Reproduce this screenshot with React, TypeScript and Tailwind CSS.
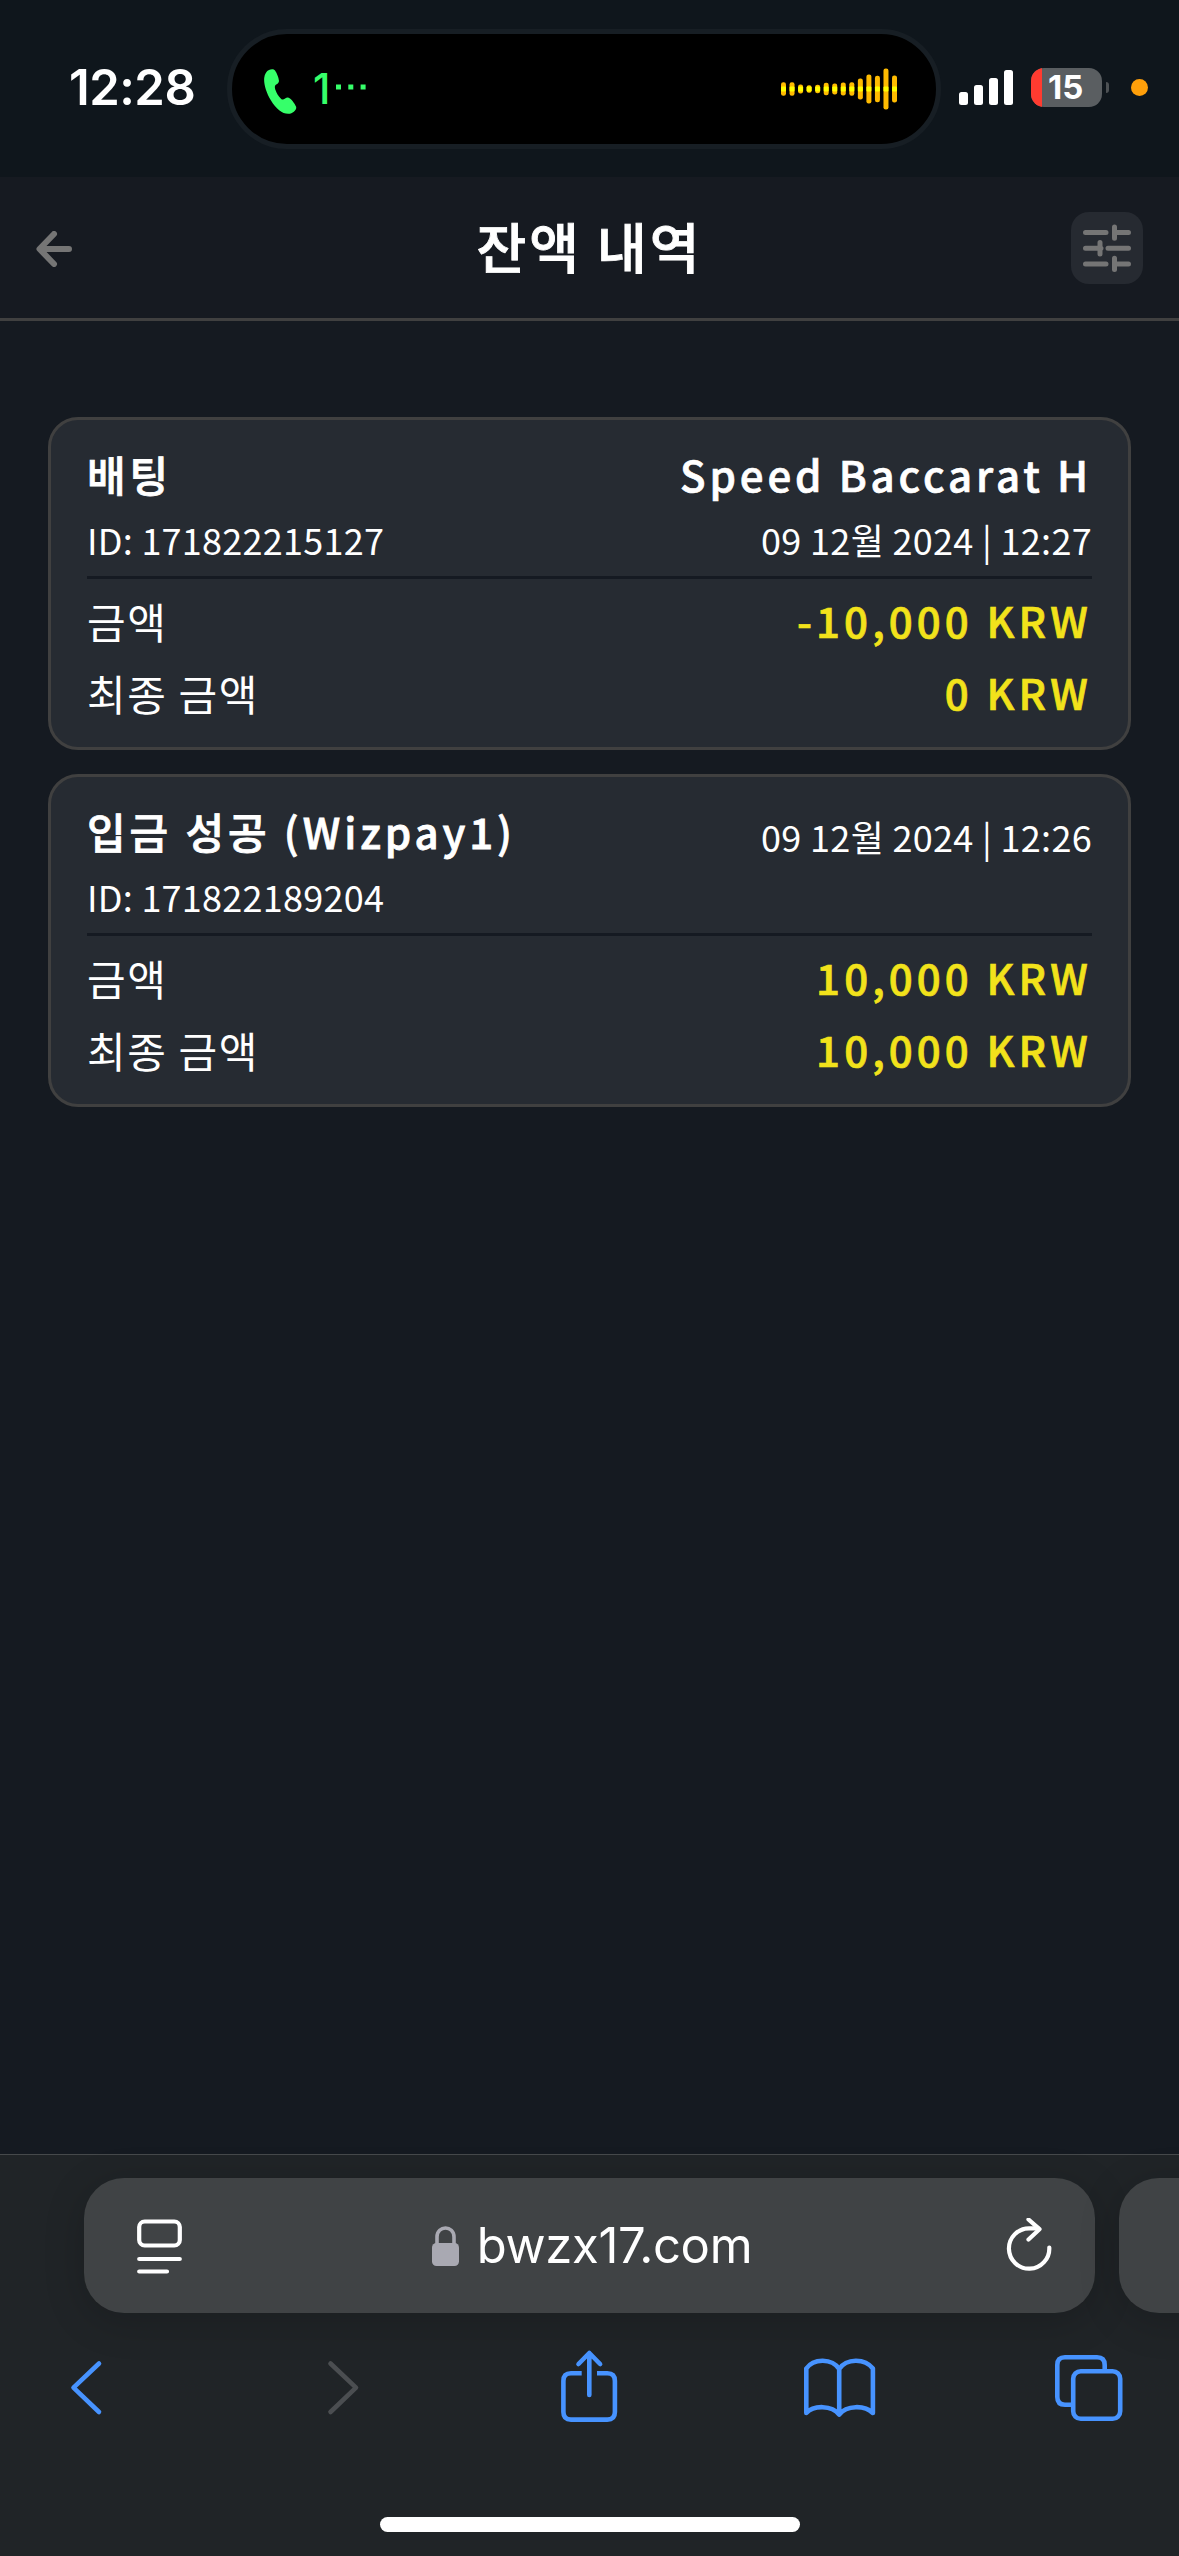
/**
 * Balance History Page
 * Transaction list shown inside the mobile browser shell
 */

import type { ReactNode } from 'react';

// ============================================================================
// Data
// ============================================================================

interface Transaction {
  id: string;
  title: string;
  game?: string;
  date: string;
  amount: string;
  finalAmount: string;
}

const TRANSACTIONS: Transaction[] = [
  {
    id: '171822215127',
    title: '배팅',
    game: 'Speed Baccarat H',
    date: '09 12월 2024 | 12:27',
    amount: '-10,000 KRW',
    finalAmount: '0 KRW',
  },
  {
    id: '171822189204',
    title: '입금 성공 (Wizpay1)',
    date: '09 12월 2024 | 12:26',
    amount: '10,000 KRW',
    finalAmount: '10,000 KRW',
  },
];

// Heights of the call audio bars, left to right
const WAVE_BARS = [13.5, 13.5, 9, 7.5, 8.5, 12.5, 11, 13, 13.5, 21, 29, 26.5, 41, 27];

// ============================================================================
// Page
// ============================================================================

export default function App() {
  return (
    <div className="flex h-[2556px] w-[1179px] flex-col overflow-hidden bg-[#151a21] font-['Noto_Sans_CJK_KR',sans-serif] text-white">
      <StatusBar />
      <PageHeader />
      <main className="flex flex-1 flex-col gap-6 px-12 pt-24">
        {TRANSACTIONS.map((item) => (
          <TransactionCard key={item.id} item={item} />
        ))}
      </main>
      <BrowserBar />
    </div>
  );
}

// ============================================================================
// Status bar
// ============================================================================

function StatusBar() {
  return (
    <div className="flex h-[177px] items-start bg-[#0f161c] pt-[29px] font-['Inter',sans-serif]">
      <div className="w-[227px] pt-[29px] pl-[69px] text-[49px] leading-[60px] font-semibold tracking-[-0.5px]">
        12:28
      </div>
      <div className="flex h-[120px] w-[714px] items-center rounded-full border-[5px] border-[#171e24] bg-black pr-[39px] pl-[32px]">
        <PhoneIcon />
        <div className="flex flex-1 items-center pl-4 text-[#36ff6a]">
          <span className="text-[42px] leading-[50px] font-medium">1</span>
          <svg className="mt-[-4px] ml-[5px] h-2 w-8" viewBox="0 0 32 8" fill="currentColor">
            <rect x="1" y="1.5" width="5" height="5" />
            <rect x="13.3" y="1.5" width="5" height="5" />
            <rect x="25.6" y="1.5" width="5" height="5" />
          </svg>
        </div>
        <Waveform />
      </div>
      <div className="flex items-start pt-[39px] pl-[18px]">
        <svg className="mt-[2px] h-[35px] w-[54px]" viewBox="0 0 54 35" fill="white">
          <rect x="0" y="22" width="9" height="13" rx="2.5" />
          <rect x="15" y="15" width="9" height="20" rx="2.5" />
          <rect x="30" y="8" width="9" height="27" rx="2.5" />
          <rect x="45" y="0" width="9" height="35" rx="2.5" />
        </svg>
        <div className="ml-[18px] flex h-[39px] w-[71px] items-center overflow-hidden rounded-[13px] bg-[#5a5e61]">
          <div className="h-full w-[11px] bg-[#ff3b30]" />
          <span className="pl-[6px] text-[33px] leading-[39px] font-bold">15</span>
        </div>
        <div className="mt-[14px] ml-1 h-[11px] w-[3px] rounded-r-full bg-[#4d5154]" />
        <div className="mt-[11px] ml-[22px] size-[17px] rounded-full bg-[#ff9f0a]" />
      </div>
    </div>
  );
}

function Waveform() {
  return (
    <svg className="h-[42px] w-[116px]" viewBox="0 0 116 42">
      {WAVE_BARS.map((height, i) => (
        <g key={i}>
          <rect x={i * 8.54} y={21 - height / 2} width="5" height={height} rx="2.2" fill="#ffbb00" />
          <rect x={i * 8.54} y="18.5" width="5" height="5" rx="1" fill="#ffff00" />
        </g>
      ))}
    </svg>
  );
}

// ============================================================================
// Page header
// ============================================================================

function PageHeader() {
  return (
    <header className="flex h-36 items-center justify-between border-b-[3px] border-[#404040] bg-[#161a21] pr-9 pl-9">
      <button type="button" className="w-[72px] pt-[2px]">
        <svg className="h-9 w-9" viewBox="0 0 36 36" fill="none" stroke="#757575" strokeWidth="6" strokeLinecap="round" strokeLinejoin="round">
          <path d="M33 18H4M18 3L3.5 18L18 33" />
        </svg>
      </button>
      <h1 className="pb-[3px] text-[54px] leading-[72px] font-medium tracking-[3px] [-webkit-text-stroke:0.9px]">
        잔액 내역
      </h1>
      <button type="button" className="flex size-[72px] items-center justify-center rounded-[18px] bg-[#262a31]">
        <svg className="size-[52px]" viewBox="0 0 52 52" fill="none" stroke="#757575" strokeWidth="5" strokeLinecap="round">
          <path d="M4.5 10.6H25M33.5 5V16.3M33.5 10.6H47.5" />
          <path d="M4.5 26.3H20M19 20.6V32M27 26.3H47.5" />
          <path d="M4.5 42H25M33.5 36.3V47.6M33.5 42H47.5" />
        </svg>
      </button>
    </header>
  );
}

// ============================================================================
// Transaction card
// ============================================================================

function TransactionCard({ item }: { item: Transaction }) {
  return (
    <section className="h-[333px] rounded-[30px] border-[3px] border-[#404040] bg-[#262b32] px-9 pt-[27px]">
      <div className="flex h-[132px] justify-between border-b-[3px] border-[#151a22]">
        <div>
          <h2 className="text-[42px] leading-[54px] font-medium tracking-[3.9px] [-webkit-text-stroke:0.8px]">
            {item.title}
          </h2>
          <p className="mt-[14px] text-[36px] leading-[48px] tracking-[0.25px]">ID: {item.id}</p>
        </div>
        <div className="flex flex-col items-end">
          {item.game && (
            <span className="mb-[6px] text-[42px] leading-[54px] font-medium tracking-[3.85px] [-webkit-text-stroke:0.7px]">
              {item.game}
            </span>
          )}
          <span className="mt-[8px] text-[36px] leading-[48px] tracking-[0.32px]">{item.date}</span>
        </div>
      </div>
      <div className="flex flex-col gap-[17px] pt-[14px]">
        <AmountRow label="금액" value={item.amount} />
        <AmountRow label="최종 금액" value={item.finalAmount} />
      </div>
    </section>
  );
}

function AmountRow({ label, value }: { label: string; value: string }) {
  return (
    <div className="flex justify-between text-[42px] leading-[54px]">
      <span className="pt-px tracking-[1.6px]">{label}</span>
      <span className="font-medium tracking-[4.1px] text-[#f2e21b] [-webkit-text-stroke:0.7px]">{value}</span>
    </div>
  );
}

// ============================================================================
// Browser bar
// ============================================================================

function BrowserBar() {
  return (
    <footer className="flex h-[402px] flex-col border-t border-[#46494b] bg-[#202427]">
      <div className="flex gap-6 pt-[23px] pl-[84px]">
        <div className="flex h-[135px] w-[1011px] shrink-0 items-center justify-between rounded-[40px] bg-[#404345] pr-[42px] pl-[51px] shadow-[0_8px_40px_rgba(0,0,0,0.18)]">
          <svg className="h-[56px] w-[48px]" viewBox="0 0 48 56" fill="none" stroke="white" strokeWidth="4.2" strokeLinecap="round">
            <rect x="4.2" y="3.5" width="40.6" height="24" rx="5.5" />
            <path d="M4.2 41H44.8M4.2 53.5H32" />
          </svg>
          <div className="flex items-center pr-[4px] font-['Inter',sans-serif] text-[49px] leading-[60px]">
            <svg className="mr-[18px] h-[40px] w-[27px]" viewBox="0 0 27 40">
              <path d="M5 20V11C5 -1 22 -1 22 11V20" fill="none" stroke="#a9a9b2" strokeWidth="3.6" />
              <rect y="17" width="27" height="23" rx="4.5" fill="#a9a9b2" />
            </svg>
            <span className="tracking-[-0.35px]">bwzx17.com</span>
          </div>
          <svg className="h-[56px] w-[48px]" viewBox="0 0 48 56" fill="none" stroke="white" strokeWidth="4.2" strokeLinecap="round" strokeLinejoin="round">
            <path d="M44.3 29.5A20.2 20.2 0 1 1 24 10.3H33" />
            <path d="M23.5 1.5L34.5 11.2L23.5 21.5" />
          </svg>
        </div>
        <div className="h-[135px] w-[300px] shrink-0 rounded-[40px] bg-[#404345] shadow-[0_8px_40px_rgba(0,0,0,0.18)]" />
      </div>
      <nav className="mt-[27px] flex justify-between pr-[42px] pl-[41px] text-[#4793ff]">
        <ToolbarIcon>
          <path d="M58 23.5L32.5 47.7L58 72" />
        </ToolbarIcon>
        <ToolbarIcon className="text-[#4b4e51]">
          <path d="M39.5 23.5L65 47.7L39.5 72" />
        </ToolbarIcon>
        <ToolbarIcon>
          <path d="M48.3 55V14M37.5 24L48.3 13L59.1 24" />
          <path strokeLinecap="butt" d="M40.7 33.3H30Q22.4 33.3 22.4 41V72Q22.4 79.6 30 79.6H66.3Q73.9 79.6 73.9 72V41Q73.9 33.3 66.3 33.3H56" />
        </ToolbarIcon>
        <ToolbarIcon>
          <path d="M48.2 29C41 18 22.5 18 15.3 28.5V73C22.5 65 41 65 48.2 74.5V29C55.4 18 73.9 18 81.9 28.5V73C73.9 65 55.4 65 48.2 74.5" />
        </ToolbarIcon>
        <ToolbarIcon>
          <path strokeLinecap="butt" d="M32 64.7H24Q16.3 64.7 16.3 57V25Q16.3 17.3 24 17.3H56Q63.7 17.3 63.7 25V31" />
          <rect x="32.2" y="31.2" width="47" height="47.5" rx="7.5" />
        </ToolbarIcon>
      </nav>
      <div className="mt-[81px] h-[15px] w-[420px] self-center rounded-full bg-white" />
    </footer>
  );
}

// ============================================================================
// Icons
// ============================================================================

function ToolbarIcon({ className, children }: { className?: string; children: ReactNode }) {
  return (
    <svg
      className={className}
      width="96"
      height="96"
      viewBox="0 0 96 96"
      fill="none"
      stroke="currentColor"
      strokeWidth="4.6"
      strokeLinecap="round"
      strokeLinejoin="round"
    >
      {children}
    </svg>
  );
}

function PhoneIcon() {
  return (
    <svg className="mt-1 h-[45px] w-[33px]" viewBox="0 0 33 45" fill="#36ff6a">
      <path d="M5 1C7 0 10 0 11 1.5C13 4.5 14.5 8 15 12C15 14 13 15 11.5 16C10.3 17.5 10.8 20 12.5 23.5C14 26.5 16 29 17.5 30.3C20 31.5 21.5 28.3 24 28.5C27 29.5 30.5 34 32 37.5C33.3 40.5 29 44.5 24.5 44.8C18.5 45 12 40 7 31.5C2 23 -0.3 15 0.2 9C0.6 5 2.5 2 5 1Z" />
    </svg>
  );
}
